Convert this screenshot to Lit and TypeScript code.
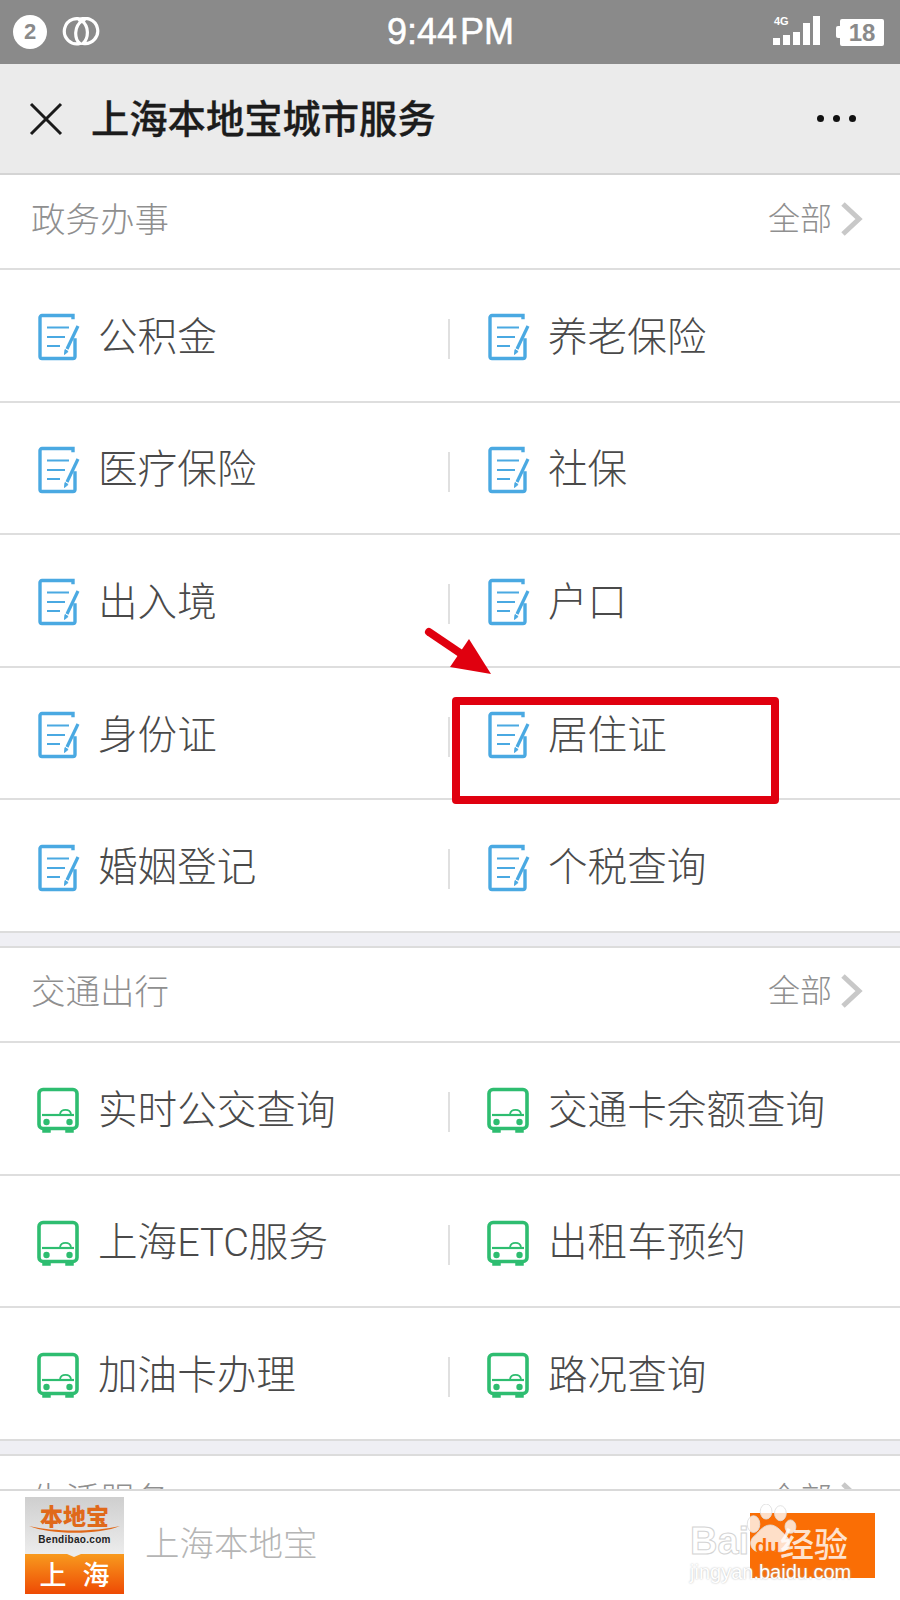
import { LitElement, html, css } from "lit";
import { customElement } from "lit/decorators.js";

const docIcon = html`<svg class="icon" viewBox="0 0 42 48" fill="none" stroke="#4aa9e2" stroke-width="3.4">
  <path d="M35 4.5V2.5H4a2 2 0 0 0-2 2v39a2 2 0 0 0 2 2h31a2 2 0 0 0 2-2V27" stroke-linecap="square" />
  <path d="M9 14.5h22M9 24h18M9 33h13" stroke-width="2.2" />
  <path d="M40 13 29 36" stroke-width="3.2" />
  <path d="M27 36.5 26.5 41.5l3.6-3z" fill="#4aa9e2" stroke-width="1" />
</svg>`;

const busIcon = html`<svg class="icon bus" viewBox="0 0 42 48" fill="none" stroke="#2ebd70" stroke-width="3.6">
  <rect x="2" y="2.5" width="38" height="39" rx="4" />
  <path d="M5 28h32" stroke-width="2.2" />
  <path d="M23 27c1-5.5 10-5.5 11 0" stroke-width="1.8" />
  <circle cx="9.5" cy="35" r="3.2" fill="#2ebd70" stroke="none" />
  <circle cx="32.5" cy="35" r="3.2" fill="#2ebd70" stroke="none" />
  <path d="M6 42v3h7v-3M29 42v3h7v-3" fill="#2ebd70" stroke-width="1.5" />
</svg>`;

const chevron = html`<svg width="22" height="34" viewBox="0 0 22 34" fill="none" stroke="#c8c8c8" stroke-width="5"><path d="M2 2l16 15L2 32" /></svg>`;

interface Section {
  title: string;
  icon: unknown;
  items: string[];
}

const sections: Section[] = [
  {
    title: "政务办事",
    icon: docIcon,
    items: ["公积金", "养老保险", "医疗保险", "社保", "出入境", "户口", "身份证", "居住证", "婚姻登记", "个税查询"],
  },
  {
    title: "交通出行",
    icon: busIcon,
    items: ["实时公交查询", "交通卡余额查询", "上海ETC服务", "出租车预约", "加油卡办理", "路况查询"],
  },
];

@customElement("app-root")
export class AppRoot extends LitElement {
  static styles = css`
    :host {
      display: flex;
      flex-direction: column;
      position: relative;
      width: 900px;
      height: 1600px;
      overflow: hidden;
      background: #fff;
      font-family: "Liberation Sans", "Noto Sans CJK SC", sans-serif;
    }

    .status {
      display: flex;
      align-items: center;
      height: 64px;
      flex: none;
      padding: 0 16px 0 13px;
      box-sizing: border-box;
      background: #8a8a8a;
      color: #fff;
    }
    .badge {
      width: 34px;
      height: 34px;
      border-radius: 50%;
      background: #fff;
      color: #8a8a8a;
      font-size: 22px;
      font-weight: bold;
      line-height: 34px;
      text-align: center;
    }
    .rings {
      margin-left: 13px;
    }
    .time {
      flex: 1;
      padding-left: 24px;
      text-align: center;
      font-size: 36px;
      word-spacing: -7px;
      -webkit-text-stroke: 0.5px #fff;
    }
    .battery {
      display: flex;
      align-items: center;
      margin-left: 15px;
    }
    .battery i {
      width: 4px;
      height: 12px;
      background: #fff;
      border-radius: 2px 0 0 2px;
    }
    .battery span {
      width: 44px;
      height: 27px;
      background: #fff;
      border-radius: 2px;
      color: #8a8a8a;
      font-size: 24px;
      font-weight: bold;
      line-height: 27px;
      text-align: center;
    }

    .nav {
      display: flex;
      align-items: center;
      flex: none;
      height: 109px;
      padding: 0 44px 0 29px;
      background: #ebebeb;
      border-bottom: 2px solid #d4d4d4;
    }
    .nav h1 {
      flex: 1;
      margin: 0 0 4px 28px;
      font-family: "Noto Sans CJK SC", sans-serif;
      font-size: 38.3px;
      font-weight: 500;
      color: #1c1c1c;
      -webkit-text-stroke: 0.3px #1c1c1c;
    }
    .dots {
      display: flex;
      gap: 9px;
    }
    .dots i {
      width: 7px;
      height: 7px;
      border-radius: 50%;
      background: #111;
    }

    main {
      flex: 1;
      min-height: 0;
      overflow: hidden;
      font-family: Roboto, "Noto Sans CJK SC", sans-serif;
      font-weight: 300;
    }
    .head {
      display: flex;
      align-items: center;
      justify-content: space-between;
      height: 93px;
      padding: 0 37px 0 31px;
      color: #8f8f8f;
      font-size: 34.5px;
    }
    .head > span:first-child {
      margin-bottom: 10px;
    }
    .more {
      display: flex;
      align-items: center;
      gap: 9px;
      font-size: 32px;
      margin-bottom: 12px;
    }
    .more svg {
      margin-top: 6px;
    }
    .grid {
      display: grid;
      grid-template-columns: 449px 1fr;
    }
    .cell {
      display: flex;
      align-items: center;
      gap: 18px;
      height: 130.6px;
      border-top: 2px solid #dedede;
      padding-left: 38px;
      color: #4a4a4a;
      font-size: 39.6px;
    }
    .cell:nth-child(even) {
      position: relative;
      padding-left: 39px;
    }
    .cell:nth-child(even)::before {
      content: "";
      position: absolute;
      left: -1px;
      top: 49px;
      width: 2px;
      height: 40px;
      background: #e0e0e0;
    }
    .icon {
      width: 42px;
      height: 48px;
      flex: none;
      margin-top: 4px;
    }
    .icon.bus {
      margin-top: 6px;
      margin-left: -1px;
      margin-right: 1px;
    }
    .cell span {
      margin-bottom: 4px;
    }
    .gap {
      height: 13px;
      background: #efeff4;
      border-top: 2px solid #dcdcdc;
      border-bottom: 2px solid #dcdcdc;
    }

    footer {
      display: flex;
      align-items: center;
      flex: none;
      height: 109px;
      padding-left: 25px;
      background: #fff;
      border-top: 2px solid #d9d9d9;
    }
    .logo {
      display: flex;
      flex-direction: column;
      width: 99px;
      height: 97px;
      font-family: "Noto Sans CJK SC", sans-serif;
    }
    .logo-top {
      position: relative;
      height: 57px;
      text-align: center;
      background: linear-gradient(#cfcfcf, #ececec);
      color: #e0691a;
      font-size: 23px;
      font-weight: 900;
      line-height: 37px;
    }
    .logo-top svg {
      position: absolute;
      left: 3px;
      top: 27px;
    }
    .logo-top small {
      position: absolute;
      left: 0;
      right: 0;
      top: 36px;
      color: #222;
      font-family: "Liberation Sans", sans-serif;
      font-size: 10px;
      font-weight: bold;
      line-height: 14px;
      letter-spacing: 0.3px;
    }
    .logo-bottom {
      position: relative;
      flex: 1;
      background: linear-gradient(#f89a1e, #ee4a04);
      color: #fff;
      font-size: 27px;
      font-weight: 500;
      line-height: 40px;
      text-align: center;
      word-spacing: 10px;
    }
    .logo-bottom::before {
      content: "";
      position: absolute;
      left: 42px;
      top: 0;
      border: 7px solid transparent;
      border-top: 3px solid #ececec;
      border-bottom: 0;
    }
    .brand {
      margin: 0 0 10px 21px;
      color: #b5b5b5;
      font-family: "Noto Sans CJK SC", sans-serif;
      font-size: 34.5px;
      font-weight: 300;
    }

    .follow {
      position: absolute;
      left: 750px;
      top: 1513px;
      width: 125px;
      height: 65px;
      background: #fa6e05;
    }
    .mark {
      position: absolute;
      left: 688px;
      top: 1502px;
      width: 170px;
      height: 82px;
      color: #fff;
      pointer-events: none;
    }
    .mark svg {
      position: absolute;
      left: 58px;
      top: 2px;
    }
    .mark b {
      position: absolute;
      left: 2px;
      top: 19px;
      font-size: 38px;
      font-weight: bold;
      line-height: 40px;
      color: #fff;
      -webkit-text-stroke: 1px #d4d4d4;
    }
    .mark .du {
      position: absolute;
      left: 67px;
      top: 33px;
      color: #fa6e05;
      font-size: 20px;
      font-weight: bold;
      line-height: 22px;
    }
    .mark .jy {
      position: absolute;
      left: 92px;
      top: 21px;
      font-family: "Noto Sans CJK SC", sans-serif;
      font-size: 34px;
      font-weight: 500;
      line-height: 40px;
      color: #fff;
      opacity: 0.8;
    }
    .mark .url {
      position: absolute;
      left: 2px;
      top: 58px;
      font-size: 20px;
      line-height: 24px;
      color: #fff;
      text-shadow: 0 0 2px #b0b0b0;
    }

    .redbox {
      position: absolute;
      left: 452px;
      top: 697px;
      width: 327px;
      height: 107px;
      box-sizing: border-box;
      border: 8px solid #e0000f;
      border-radius: 4px;
    }
    .arrow {
      position: absolute;
      left: 420px;
      top: 625px;
    }
  `;

  private renderSection(s: Section) {
    return html`
      <section>
        <div class="head">
          <span>${s.title}</span>
          <span class="more">全部${chevron}</span>
        </div>
        <div class="grid">
          ${s.items.map((t) => html`<div class="cell">${s.icon}<span>${t}</span></div>`)}
        </div>
      </section>
    `;
  }

  render() {
    return html`
      <div class="status">
        <div class="badge">2</div>
        <svg class="rings" width="44" height="30" viewBox="0 0 44 30" fill="none" stroke="#fff" stroke-width="3.2">
          <path d="M25 4.6A12.6 12.6 0 1 0 20 26.5C14 22 14 9 22 4" />
          <path d="M18 3.6A12.6 12.6 0 1 1 23 26.4C29 21 29 9 22 4" />
        </svg>
        <div class="time">9:44 PM</div>
        <svg width="48" height="32" viewBox="0 0 48 32" fill="#fff">
          <text x="1" y="9" font-size="11" font-weight="bold" font-family="Liberation Sans">4G</text>
          <rect x="0" y="22" width="7" height="7" />
          <rect x="10" y="19" width="7" height="10" />
          <rect x="20" y="16" width="7" height="13" />
          <rect x="30" y="7" width="7" height="22" />
          <rect x="40" y="0" width="7" height="29" />
        </svg>
        <div class="battery"><i></i><span>18</span></div>
      </div>

      <div class="nav">
        <svg width="34" height="34" viewBox="0 0 34 34" stroke="#1a1a1a" stroke-width="3"><path d="M2 2l30 30M32 2L2 32" /></svg>
        <h1>上海本地宝城市服务</h1>
        <div class="dots"><i></i><i></i><i></i></div>
      </div>

      <main>
        ${this.renderSection(sections[0])}
        <div class="gap"></div>
        ${this.renderSection(sections[1])}
        <div class="gap"></div>
        <div class="head"><span>生活服务</span><span class="more">全部${chevron}</span></div>
      </main>

      <footer>
        <div class="logo">
          <div class="logo-top">
            本地宝
            <svg width="93" height="10" viewBox="0 0 93 10"><path d="M1 2c25 6 65 6 91 0-20 9-70 9-91 0z" fill="#e0691a" /></svg>
            <small>Bendibao.com</small>
          </div>
          <div class="logo-bottom">上 海</div>
        </div>
        <span class="brand">上海本地宝</span>
      </footer>

      <div class="follow"></div>
      <div class="mark">
        <b>Bai</b>
        <svg width="52" height="52" viewBox="0 0 62 62" fill="#fff" fill-opacity="0.78" stroke="#dcdcdc" stroke-width="1">
          <ellipse cx="9" cy="24" rx="7.5" ry="10" />
          <ellipse cx="24" cy="9" rx="7" ry="9" />
          <ellipse cx="41" cy="11" rx="7" ry="9" />
          <ellipse cx="53" cy="27" rx="6.5" ry="8" />
          <path d="M29 25c8 0 13 8 20 14 6 6 3 18-8 18-6 0-8-2-12-2s-7 2-13 2C6 57 3 46 8 40c7-6 12-15 21-15z" />
        </svg>
        <span class="du">du</span>
        <span class="jy">经验</span>
        <span class="url">jingyan.baidu.com</span>
      </div>

      <div class="redbox"></div>
      <svg class="arrow" width="76" height="56" viewBox="0 0 76 56" fill="#e0000f">
        <path d="M9 7l34 23" stroke="#e0000f" stroke-width="8" stroke-linecap="round" />
        <path d="M49 14 71 49 30 42z" />
      </svg>
    `;
  }
}
